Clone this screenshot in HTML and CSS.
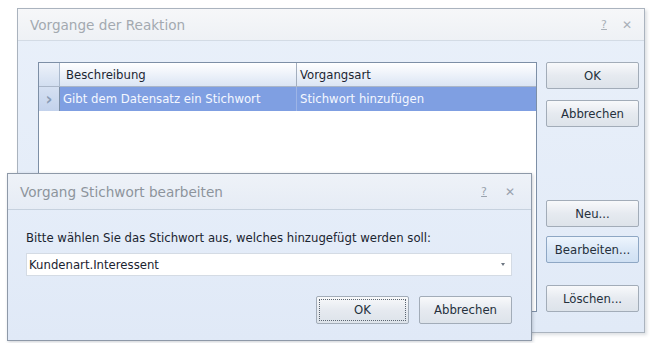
FILE: index.html
```html
<!DOCTYPE html>
<html>

<head>
    <title>Vorgänge der Reaktion</title>
    <link rel="stylesheet" href="styles.css">
</head>

<body>
    <div class="window outer">
        <div class="titlebar">
            <span class="title">Vorgange der Reaktion</span>
            <span class="controls"><span class="help">?</span><span class="close">&#x2715;</span></span>
        </div>
        <div class="content">
            <div class="grid">
                <div class="row head">
                    <div class="cell marker"></div>
                    <div class="cell c1">Beschreibung</div>
                    <div class="cell c2">Vorgangsart</div>
                </div>
                <div class="row selected">
                    <div class="cell marker">&#x203A;</div>
                    <div class="cell c1">Gibt dem Datensatz ein Stichwort</div>
                    <div class="cell c2">Stichwort hinzufügen</div>
                </div>
                <div class="filler"></div>
            </div>
            <div class="side">
                <button class="btn">OK</button>
                <button class="btn second">Abbrechen</button>
                <button class="btn new">Neu...</button>
                <button class="btn second hot">Bearbeiten...</button>
                <button class="btn del">Löschen...</button>
            </div>
        </div>
    </div>

    <div class="window inner">
        <div class="titlebar">
            <span class="title">Vorgang Stichwort bearbeiten</span>
            <span class="controls"><span class="help">?</span><span class="close">&#x2715;</span></span>
        </div>
        <div class="form">
            <div class="label">Bitte wählen Sie das Stichwort aus, welches hinzugefügt werden soll:</div>
            <div class="combo">
                <span>Kundenart.Interessent</span>
                <span class="arrow"></span>
            </div>
            <div class="actions">
                <button class="btn focus"><span>OK</span></button>
                <button class="btn">Abbrechen</button>
            </div>
        </div>
    </div>
</body>

</html>
```

FILE: styles.css
```css
body {
    margin: 0;
    background: #ffffff;
    font-family: "DejaVu Sans", Verdana, sans-serif;
    font-size: 11.7px;
    color: #1f2a36;
    position: relative;
    width: 659px;
    height: 343px;
    overflow: hidden;
}

.window {
    border: 1px solid #aab3be;
    background: linear-gradient(#e9f0fa, #e1eaf7);
    box-sizing: border-box;
}

.outer {
    margin: 8px 0 0 17px;
    width: 628px;
    height: 325px;
    box-shadow: 2px 2px 3px rgba(120, 130, 145, 0.25);
}

.titlebar {
    display: flex;
    align-items: center;
    justify-content: space-between;
    border-bottom: 1px solid #d3dbe5;
    background: linear-gradient(#f6f7f9, #eef1f5);
}

.outer .titlebar {
    height: 31px;
    padding: 0 12px 0 12px;
}

.title {
    font-size: 13.6px;
    color: #a3a9b0;
}

.controls {
    display: flex;
    gap: 15px;
    color: #a9b0b8;
}

.help {
    font-size: 11px;
    text-decoration: underline;
}

.close {
    font-size: 12px;
}

.content {
    display: flex;
    padding: 21px 0 0 20px;
}

.grid {
    width: 499px;
    height: 250px;
    border: 1px solid #7d8fa6;
    box-sizing: border-box;
    background: #ffffff;
    display: flex;
    flex-direction: column;
}

.row {
    display: flex;
    height: 23px;
}

.cell {
    display: flex;
    align-items: center;
    padding-left: 3px;
    box-sizing: border-box;
    white-space: nowrap;
}

.marker {
    width: 21px;
    padding: 0;
    justify-content: center;
    border-right: 1px solid #a9b8cc;
    background: linear-gradient(#edf2fa, #d2def0);
}

.c1 {
    width: 237px;
    border-right: 1px solid #a3aebd;
}

.c2 {
    flex: 1;
}

.head {
    background: linear-gradient(#ffffff, #dbe5f4);
    border-bottom: 1px solid #aab6c8;
    color: #1c2633;
}

.head .c1 {
    padding-left: 6px;
}

.selected {
    height: 24px;
    background: #7f9fe2;
    color: #f4f7ff;
}

.selected .c1 {
    border-right-color: #9db4e6;
}

.selected .marker {
    background: linear-gradient(#d5e0f2, #c3d2ec);
    color: #8a9bb5;
    font-size: 17px;
    font-weight: bold;
    border-right-color: #7d8fa6;
}

.filler {
    flex: 1;
}

.side {
    display: flex;
    flex-direction: column;
    margin-left: 9px;
    width: 93px;
}

.btn {
    font-family: "DejaVu Sans", Verdana, sans-serif;
    font-size: 11.7px;
    color: #25303c;
    height: 27px;
    border: 1px solid #a2acb8;
    border-radius: 2px;
    background: linear-gradient(#f8f9fb, #e6eaf0 50%, #dde3ea);
    padding: 0;
}

.side .btn {
    width: 93px;
}

.second {
    margin-top: 11px;
}

.new {
    margin-top: 73px;
}

.hot {
    margin-top: 9px;
    background: linear-gradient(#eef5fd, #dbe8f7 50%, #cfe0f3);
    border-color: #8ea7c4;
}

.del {
    margin-top: 22px;
}

.inner {
    position: absolute;
    left: 7px;
    top: 173px;
    width: 525px;
    height: 168px;
    border-color: #8e99a8;
    box-shadow: 1px 1px 3px rgba(90, 100, 115, 0.3);
    background: linear-gradient(#e6eef9, #e0e9f7);
}

.inner .titlebar {
    height: 35px;
    padding: 0 16px 0 12px;
    border-bottom-color: #c6d1de;
    background: linear-gradient(#eef2f8, #e6ecf5);
}

.inner .title {
    color: #8d949c;
}

.inner .controls {
    gap: 18px;
    color: #99a2ad;
}

.form {
    padding: 17px 19px 0 18px;
}

.label {
    line-height: 23px;
    color: #1b2430;
}

.combo {
    margin-top: 3px;
    height: 23px;
    border: 1px solid #d4dbe4;
    background: #ffffff;
    box-sizing: border-box;
    display: flex;
    align-items: center;
    justify-content: space-between;
    padding: 0 6px 0 2px;
    color: #1a2230;
}

.arrow {
    width: 0;
    height: 0;
    border-left: 2px solid transparent;
    border-right: 2px solid transparent;
    border-top: 3px solid #6d7682;
}

.actions {
    display: flex;
    justify-content: flex-end;
    gap: 10px;
    margin-top: 20px;
}

.actions .btn {
    width: 93px;
    height: 28px;
}

.focus {
    width: 91px;
    padding: 2px;
}

.focus span {
    display: flex;
    align-items: center;
    justify-content: center;
    height: 100%;
    border: 1px dotted #5a6470;
    box-sizing: border-box;
}
```
